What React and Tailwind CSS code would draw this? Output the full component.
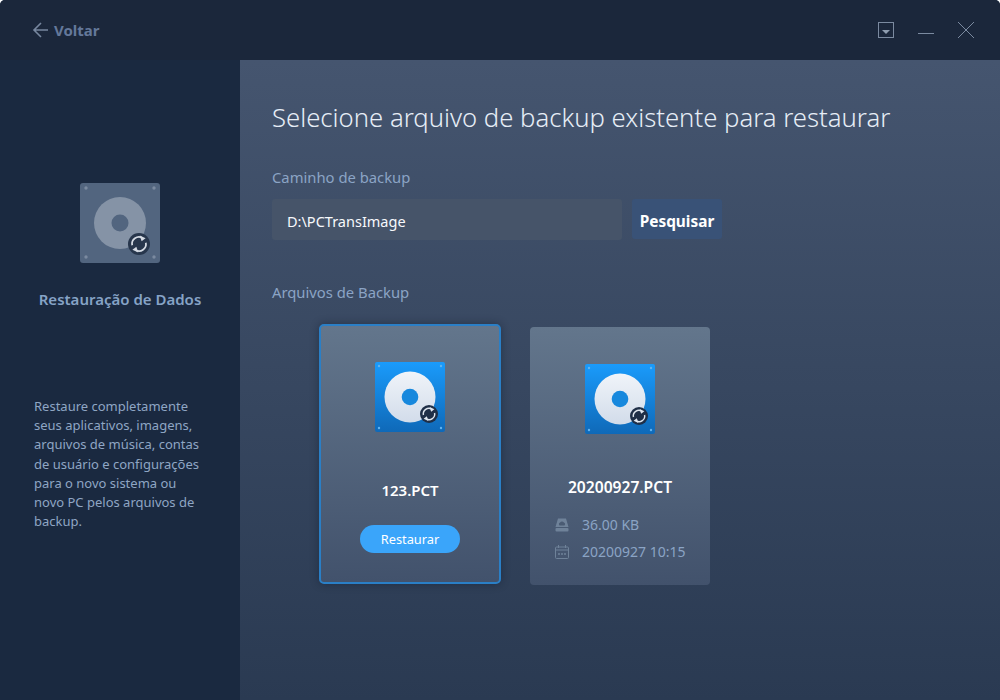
import React from "react";

function Sync({ cx, cy, r, bg, stroke }) {
  const s = r * 0.62;
  const a = r * 0.24;
  return (
    <g>
      <circle cx={cx} cy={cy} r={r} fill={bg} />
      <path d={`M${cx - s} ${cy + s * 0.18}A${s} ${s} 0 0 1 ${cx + s * 0.5} ${cy - s * 0.87}`} fill="none" stroke={stroke} strokeWidth={r * 0.16} />
      <path d={`M${cx + s} ${cy - s * 0.18}A${s} ${s} 0 0 1 ${cx - s * 0.5} ${cy + s * 0.87}`} fill="none" stroke={stroke} strokeWidth={r * 0.16} />
      <path d={`M${cx + s * 0.5 - a} ${cy - s * 0.87 - a}L${cx + s * 0.5 + a * 1.2} ${cy - s * 0.87 + a * 0.1}L${cx + s * 0.5 - a * 0.3} ${cy - s * 0.87 + a * 1.2}Z`} fill={stroke} />
      <path d={`M${cx - s * 0.5 + a} ${cy + s * 0.87 + a}L${cx - s * 0.5 - a * 1.2} ${cy + s * 0.87 - a * 0.1}L${cx - s * 0.5 + a * 0.3} ${cy + s * 0.87 - a * 1.2}Z`} fill={stroke} />
    </g>
  );
}

function BlueDisk({ id }) {
  return (
    <svg width="70" height="70" viewBox="0 0 70 70" className="block">
      <defs>
        <linearGradient id={`b${id}`} x1="0" y1="0" x2="0" y2="1">
          <stop offset="0" stopColor="#1a9bfb" />
          <stop offset="1" stopColor="#0f69b8" />
        </linearGradient>
        <linearGradient id={`w${id}`} x1="0" y1="0" x2="0" y2="1">
          <stop offset="0" stopColor="#f0f4f9" />
          <stop offset="1" stopColor="#d2dcea" />
        </linearGradient>
      </defs>
      <rect width="70" height="70" rx="2" fill={`url(#b${id})`} />
      {[[4, 4], [66, 4], [4, 66], [66, 66]].map(([x, y]) => (
        <circle key={`${x}${y}`} cx={x} cy={y} r="1.2" fill="#62b4ef" />
      ))}
      <circle cx="35" cy="35" r="25.5" fill={`url(#w${id})`} />
      <circle cx="35" cy="35" r="8.3" fill="#1788dd" />
      <Sync cx={54} cy={52} r={9} bg="#1f2f47" stroke="#dfe6ef" />
    </svg>
  );
}

function GreyDisk() {
  return (
    <svg width="80" height="80" viewBox="0 0 80 80" className="block">
      <rect width="80" height="80" rx="3" fill="#52657f" />
      {[[6, 5], [74, 5], [6, 74], [74, 74]].map(([x, y]) => (
        <circle key={`${x}${y}`} cx={x} cy={y} r="1.7" fill="#7b8aa0" />
      ))}
      <circle cx="40" cy="40" r="26" fill="#8593a6" />
      <circle cx="40" cy="40" r="8.5" fill="#52657f" />
      <Sync cx={59} cy={61} r={11} bg="#27364c" stroke="#d5dbe4" />
    </svg>
  );
}

export default function App() {
  return (
    <div className="w-[1000px] h-[700px] bg-white overflow-hidden" style={{ fontFamily: '"Noto Sans", "Open Sans", sans-serif' }}>
      <div className="w-full h-full rounded-t-[5px] overflow-hidden flex flex-col bg-[#1a2940]">
        <header className="h-[60px] shrink-0 bg-[#1b273b] flex items-center justify-between pl-[32px] pr-[26px]">
          <div className="flex items-center gap-[5px] text-[#64789a]">
            <svg width="17" height="16" viewBox="0 0 17 16" fill="none" stroke="#77879f" strokeWidth="1.6" className="-mt-[1px]">
              <path d="M16 8H2M9 1L2 8l7 7" />
            </svg>
            <span className="text-[15px] font-bold leading-none">Voltar</span>
          </div>
          <div className="flex items-center">
            <svg width="16" height="16" viewBox="0 0 16 16" className="mr-[24px]">
              <rect x="0.5" y="0.5" width="15" height="15" fill="none" stroke="#7b8aa0" />
              <path d="M4 8h8l-4 4z" fill="#8f9db0" />
            </svg>
            <svg width="16" height="16" viewBox="0 0 16 16" className="mr-[24px]">
              <path d="M0 11.5h16" stroke="#7b8aa0" />
            </svg>
            <svg width="16" height="16" viewBox="0 0 16 16">
              <path d="M0 0L16 16M16 0L0 16" stroke="#7b8aa0" />
            </svg>
          </div>
        </header>
        <div className="flex-1 flex min-h-0">
          <aside className="w-[240px] shrink-0 bg-[#1a2940] flex flex-col items-center pt-[123px]">
            <GreyDisk />
            <div className="mt-[24px] text-[15px] font-semibold leading-[24px] text-[#86a3c6] whitespace-nowrap">Restauração de Dados</div>
            <p className="mt-[86px] w-full pl-[34px] pr-[36px] text-[13px] leading-[19.2px] text-[#8fa6c4]">
              Restaure completamente seus aplicativos, imagens, arquivos de música, contas de usuário e configurações para o novo sistema ou novo PC pelos arquivos de backup.
            </p>
          </aside>
          <main className="flex-1 bg-gradient-to-b from-[#45556f] to-[#2a3a52] pl-[32px]">
            <h1 className="mt-[41px] text-[25.7px] font-light leading-[34px] text-[#e6edf6] whitespace-nowrap">Selecione arquivo de backup existente para restaurar</h1>
            <div className="mt-[32px] text-[14.8px] leading-[20px] text-[#8ba4c5]">Caminho de backup</div>
            <div className="mt-[12px] flex gap-[10px]">
              <div className="w-[350px] h-[41px] rounded-[3px] bg-[#465469] pl-[15px] pt-[4px] flex items-center text-[14.5px] text-[#f7f9fc]">D:\PCTransImage</div>
              <button className="w-[90px] h-[40px] rounded-[3px] bg-[#395277] pt-[6px] text-[15.4px] font-bold text-white">Pesquisar</button>
            </div>
            <div className="mt-[42px] text-[14.8px] leading-[20px] text-[#8ba4c5]">Arquivos de Backup</div>
            <div className="mt-[22px] pl-[47px] flex items-start gap-[29px]">
              <div className="w-[182px] h-[260px] rounded-[5px] border-2 border-[#2a7fc6] bg-gradient-to-b from-[#63768c] to-[#42526c] shadow-[0_0_8px_rgba(15,25,40,0.45)] flex flex-col items-center pt-[36px]">
                <BlueDisk id="a" />
                <div className="mt-[46px] text-[15px] font-semibold leading-[24px] text-white">123.PCT</div>
                <button className="mt-[23px] w-[100px] h-[28px] rounded-full bg-[#3aa5fa] pt-[2px] text-[12.8px] text-white">Restaurar</button>
              </div>
              <div className="mt-[3px] w-[180px] h-[258px] rounded-[4px] bg-gradient-to-b from-[#63768c] to-[#42526c] flex flex-col items-center pt-[37px]">
                <BlueDisk id="c" />
                <div className="mt-[41px] text-[15.6px] font-semibold leading-[24px] text-white">20200927.PCT</div>
                <div className="mt-[16px] w-full pl-[25px] flex items-center gap-[13px] text-[14px] leading-[20px] text-[#8ba4c5]">
                  <svg width="14" height="14" viewBox="0 0 14 14" fill="#6f8299">
                    <path d="M3 0.5h8l2.5 8.5H0.5z" />
                    <rect x="0.5" y="10" width="13" height="3.5" rx="1" />
                    <path d="M4.5 7.5h5a2 2 0 0 0-.6-3 2.3 2.3 0 0 0-3.8 0 2 2 0 0 0-.6 3z" fill="#4a5b73" />
                  </svg>
                  <span>36.00 KB</span>
                </div>
                <div className="mt-[7px] w-full pl-[25px] flex items-center gap-[13px] text-[14px] leading-[20px] text-[#8ba4c5] whitespace-nowrap">
                  <svg width="14" height="14" viewBox="0 0 14 14" fill="none" stroke="#6f8299">
                    <rect x="0.5" y="2" width="13" height="11.5" rx="1" />
                    <path d="M0.5 5h13M3.5 0v3M10.5 0v3" />
                    <path d="M3 9h2M6 9h2M9 9h2" strokeWidth="1.5" />
                  </svg>
                  <span>20200927 10:15</span>
                </div>
              </div>
            </div>
          </main>
        </div>
      </div>
    </div>
  );
}
